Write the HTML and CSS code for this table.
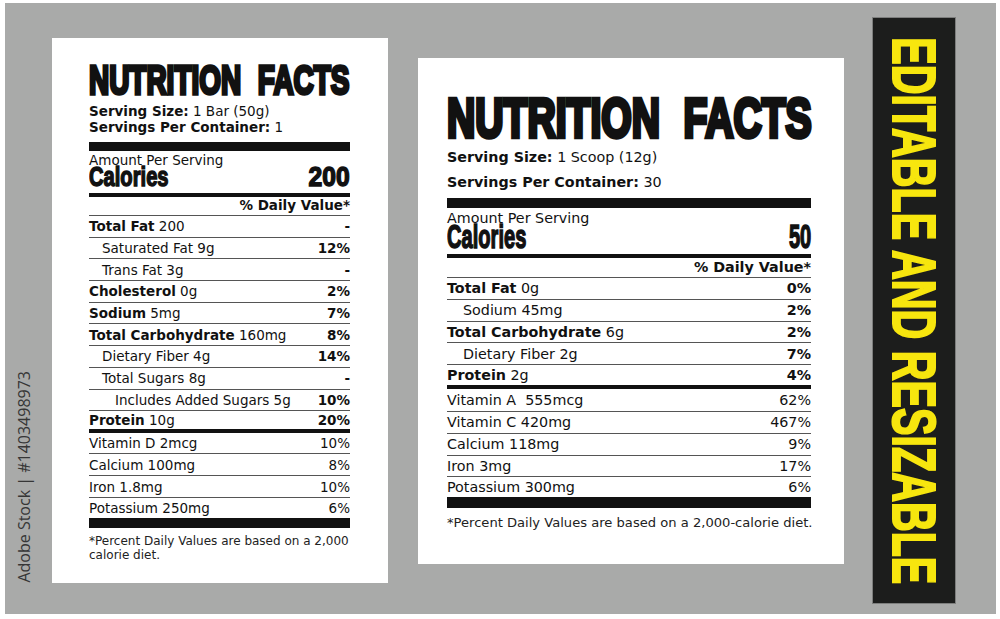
FILE: index.html
```html
<!DOCTYPE html>
<html lang="en">
<head>
<meta charset="utf-8">
<title>Nutrition Facts</title>
<link rel="stylesheet" href="styles.css">
</head>
<body>
<div class="sheet">
  <div class="stock"><span>Adobe Stock | #1403498973</span></div>

  <section class="label label--a">
    <h1 class="title"><span>NUTRITION FACTS</span></h1>
    <p class="serv"><b>Serving Size:</b> 1 Bar (50g)</p>
    <p class="serv serv--2"><b>Servings Per Container:</b> 1</p>
    <div class="bar bar--xl"></div>
    <p class="amount">Amount Per Serving</p>
    <div class="cal"><span class="cal-l">Calories</span><span class="cal-n">200</span></div>
    <div class="bar bar--md"></div>
    <div class="dv">% Daily Value*</div>
    <ul class="rows">
      <li class="row"><span><b>Total Fat</b> 200</span><b>-</b></li>
      <li class="row ind1"><span>Saturated Fat 9g</span><b>12%</b></li>
      <li class="row ind1"><span>Trans Fat 3g</span><b>-</b></li>
      <li class="row"><span><b>Cholesterol</b> 0g</span><b>2%</b></li>
      <li class="row"><span><b>Sodium</b> 5mg</span><b>7%</b></li>
      <li class="row"><span><b>Total Carbohydrate</b> 160mg</span><b>8%</b></li>
      <li class="row ind1"><span>Dietary Fiber 4g</span><b>14%</b></li>
      <li class="row ind1"><span>Total Sugars 8g</span><b>-</b></li>
      <li class="row ind2"><span>Includes Added Sugars 5g</span><b>10%</b></li>
      <li class="row row--end"><span><b>Protein</b> 10g</span><b>20%</b></li>
      <li class="row row--thick"><span>Vitamin D 2mcg</span><span>10%</span></li>
      <li class="row"><span>Calcium 100mg</span><span>8%</span></li>
      <li class="row"><span>Iron 1.8mg</span><span>10%</span></li>
      <li class="row row--pot"><span>Potassium 250mg</span><span>6%</span></li>
    </ul>
    <div class="bar bar--xl bar--foot"></div>
    <p class="note">*Percent Daily Values are based on a 2,000 calorie diet.</p>
  </section>

  <section class="label label--b">
    <h1 class="title"><span>NUTRITION FACTS</span></h1>
    <p class="serv"><b>Serving Size:</b> 1 Scoop (12g)</p>
    <p class="serv serv--2"><b>Servings Per Container:</b> 30</p>
    <div class="bar bar--xl"></div>
    <p class="amount">Amount Per Serving</p>
    <div class="cal"><span class="cal-l">Calories</span><span class="cal-n">50</span></div>
    <div class="bar bar--md"></div>
    <div class="dv">% Daily Value*</div>
    <ul class="rows">
      <li class="row"><span><b>Total Fat</b> 0g</span><b>0%</b></li>
      <li class="row ind1"><span>Sodium 45mg</span><b>2%</b></li>
      <li class="row"><span><b>Total Carbohydrate</b> 6g</span><b>2%</b></li>
      <li class="row ind1"><span>Dietary Fiber 2g</span><b>7%</b></li>
      <li class="row row--end"><span><b>Protein</b> 2g</span><b>4%</b></li>
      <li class="row row--thick"><span>Vitamin A&nbsp; 555mcg</span><span>62%</span></li>
      <li class="row"><span>Vitamin C 420mg</span><span>467%</span></li>
      <li class="row"><span>Calcium 118mg</span><span>9%</span></li>
      <li class="row"><span>Iron 3mg</span><span>17%</span></li>
      <li class="row row--pot"><span>Potassium 300mg</span><span>6%</span></li>
    </ul>
    <div class="bar bar--xl bar--foot"></div>
    <p class="note">*Percent Daily Values are based on a 2,000-calorie diet.</p>
  </section>

  <aside class="banner"><span>EDITABLE AND RESIZABLE</span></aside>
</div>
</body>
</html>
```
FILE: styles.css
```css
* { box-sizing: border-box; margin: 0; padding: 0; }

body {
  width: 1000px;
  height: 619px;
  overflow: hidden;
  background: #ffffff;
  font-family: "DejaVu Sans", "Liberation Sans", sans-serif;
  color: #111111;
}

.sheet {
  margin: 3px 0 0 5px;
  width: 991px;
  height: 611px;
  background: #a9aaa9;
  display: flex;
  align-items: flex-start;
}

/* vertical credit text */
.stock {
  align-self: stretch;
  width: 47px;
  flex: none;
  display: flex;
  flex-direction: column;
  justify-content: flex-end;
  padding: 0 0 31px 10px;
}
.stock span {
  writing-mode: vertical-rl;
  transform: rotate(180deg);
  font-family: "Open Sans", sans-serif;
  font-size: 16px;
  line-height: 18px;
  color: #363636;
  white-space: nowrap;
}

/* label cards */
.label {
  flex: none;
  background: #ffffff;
  display: flex;
  flex-direction: column;
}
.label--a {
  width: 336px;
  height: 545px;
  margin-top: 35px;
  padding: 25px 38px 0 37px;
  font-size: 13.5px;
  --rh: 21.7px;
}
.label--b {
  width: 426px;
  height: 506px;
  margin: 55px 0 0 30px;
  padding: 37px 33px 0 29px;
  font-size: 14.3px;
  --rh: 21.8px;
}

.title {
  font-family: "Liberation Sans", sans-serif;
  font-weight: 700;
  white-space: nowrap;
  letter-spacing: 0;
}
.title span {
  display: inline-block;
  transform-origin: 0 50%;
  -webkit-text-stroke: 3.5px #111;
  paint-order: stroke fill;
}
.label--a .title { font-size: 40.5px; line-height: 34px; height: 34px; }
.label--a .title span { transform: scaleX(0.69); word-spacing: 13px; }
.label--b .title { font-size: 55.9px; line-height: 46px; height: 46px; }
.label--b .title span { transform: scaleX(0.70); word-spacing: 18px; -webkit-text-stroke: 4.5px #111; }

.serv { white-space: nowrap; }
.serv b { font-weight: 700; }
.label--a .serv { line-height: 16px; margin-top: 0; }
.label--a .serv:first-of-type { margin-top: 6px; }
.label--b .serv { line-height: 17px; margin-top: 8px; }

.bar { background: #111111; flex: none; }
.label--a .bar--md { height: 4px; margin-top: 6px; }
.label--b .bar--md { height: 4px; margin-top: 5px; }
.label--a .bar--xl { height: 9px; margin-top: 7px; }
.label--b .bar--xl { height: 10px; margin-top: 7px; }

.amount { white-space: nowrap; line-height: 14px; margin-top: 2px; }
.label--b .amount { margin-top: 2.5px; }

.cal {
  display: flex;
  justify-content: space-between;
  align-items: baseline;
  font-family: "Liberation Sans", sans-serif;
  font-weight: 700;
  white-space: nowrap;
}
.cal span {
  display: inline-block;
  -webkit-text-stroke: 1.5px #111;
  paint-order: stroke fill;
}
.cal-l { transform-origin: 0 50%; }
.cal-n { transform-origin: 100% 50%; }
.label--a .cal { font-size: 28px; line-height: 20px; height: 20px; }
.label--a .cal-l { transform: scaleX(0.72); }
.label--a .cal-n { transform: scaleX(0.88); }
.label--b .cal { font-size: 33.5px; line-height: 24px; height: 24px; }
.label--b .cal-l { transform: scaleX(0.6); }
.label--b .cal-n { transform: scaleX(0.6); }

.dv {
  text-align: right;
  font-weight: 700;
}
.label--a .dv { line-height: 16px; padding-bottom: 2px; }
.label--b .dv { line-height: 17px; margin-top: 1px; padding-bottom: 1.5px; }

.rows { list-style: none; }
.row {
  display: flex;
  justify-content: space-between;
  align-items: center;
  height: var(--rh);
  border-top: 1px solid #555555;
  line-height: 16px;
  white-space: nowrap;
}
.row b { font-weight: 700; }
.label--a .ind1 { padding-left: 13px; }
.label--a .ind2 { padding-left: 26px; }
.label--b .ind1 { padding-left: 16px; }

.row--thick { border-top: 4px solid #111111; }
.label--a .row--end { height: 19.3px; }
.label--a .row--thick { height: 24px; }
.label--a .row--pot { height: 21.3px; }
.label--b .row--end { height: 20.8px; }
.label--b .row--thick { height: 26px; }
.label--b .row--pot { height: 21px; }

.label--b .bar--foot { height: 11px; margin-top: 0; }
.label--a .bar--foot { height: 10px; margin-top: 0; }

.note { color: #222; }
.label--a .note { font-size: 12px; line-height: 14px; margin-top: 6px; }
.label--b .note { font-size: 13.1px; line-height: 15px; margin-top: 7px; white-space: nowrap; }

/* side banner */
.banner {
  flex: none;
  width: 84px;
  height: 587px;
  margin: 14px 0 0 28px;
  background: #1c1d1c;
  border: 1px solid #7d7e7d;
  display: flex;
  align-items: center;
  justify-content: center;
  overflow: hidden;
}
.banner span {
  flex: none;
  font-family: "Liberation Sans", sans-serif;
  font-weight: 700;
  font-size: 61.5px;
  line-height: 1;
  color: #f7e60e;
  white-space: nowrap;
  -webkit-text-stroke: 2px #f7e60e;
  transform: rotate(90deg) scaleX(0.67);
}
```
